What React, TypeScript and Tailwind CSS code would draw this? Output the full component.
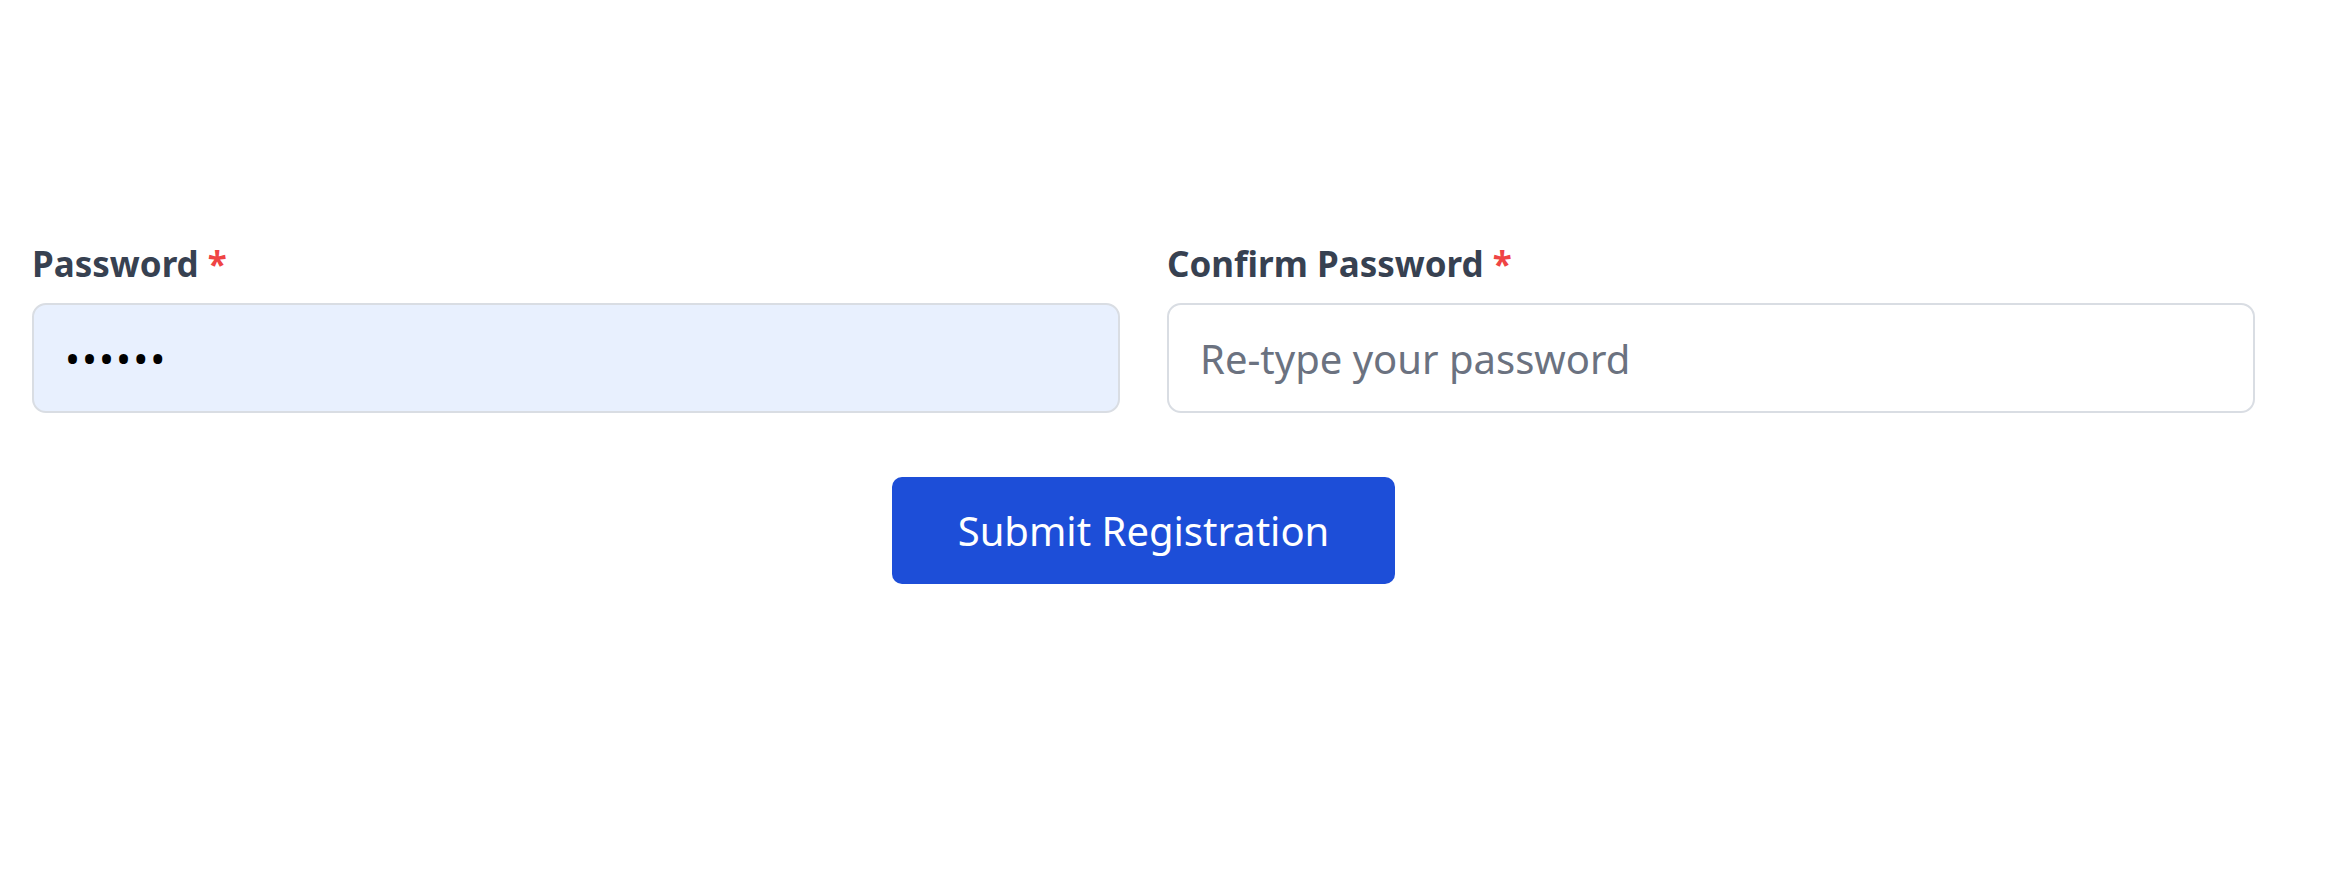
type fieldProps = {
    label: string,
    name: string,
    placeholder: string,
    value?: string,
    filled?: boolean
}

const Field = ({label, name, placeholder, value, filled}: fieldProps) => {
    return (
        <div className="flex flex-col">
            <label htmlFor={name} className="mb-[15px] text-[35px] leading-[48px] font-bold text-[#374151]">
                {label} <span className="text-[#ef4444]">*</span>
            </label>
            <input
                id={name}
                name={name}
                type="password"
                placeholder={placeholder}
                defaultValue={value}
                className={`h-[110px] w-full rounded-[14px] border-2 border-[#d9dde3] px-[31px] text-[40px] text-black placeholder:text-[#6b7280] outline-none ${filled ? 'bg-[#e8f0fe] tracking-[2px]' : 'bg-white'}`}
            />
        </div>
    )
}

export default function App() {
    return (
        <div className="min-h-[870px] w-full bg-white font-['Noto_Sans',sans-serif]">
            <form className="w-[2255px] pl-[32px] pt-[240px]" onSubmit={e => e.preventDefault()}>
                <div className="grid grid-cols-2 gap-x-[47px]">
                    <Field label="Password" name="password" placeholder="Enter your password" value="secret" filled />
                    <Field label="Confirm Password" name="confirm" placeholder="Re-type your password" />
                </div>
                <div className="mt-[64px] flex justify-center">
                    <button type="submit" className="h-[107px] w-[503px] rounded-[10px] bg-[#1d4ed8] text-[40px] text-white">
                        Submit Registration
                    </button>
                </div>
            </form>
        </div>
    )
}
